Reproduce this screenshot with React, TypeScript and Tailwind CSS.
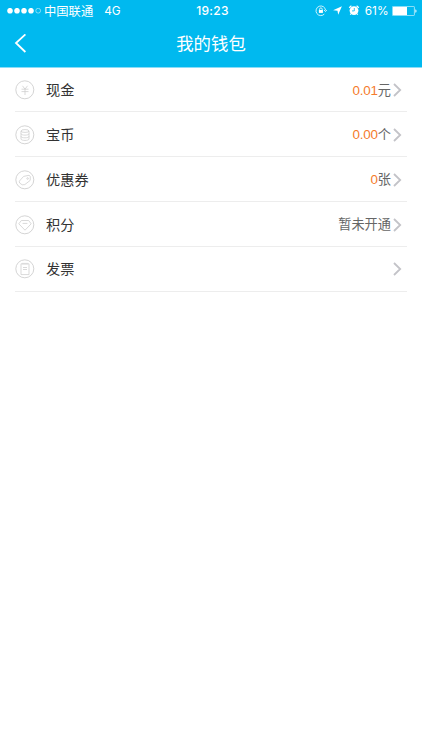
import type { ReactNode } from 'react';

const cjk = "font-['Liberation_Sans','Noto_Sans_CJK_SC',sans-serif]";

function RowIcon({ children }: { children: ReactNode }) {
  return (
    <svg className="h-5 w-5 shrink-0" viewBox="0 0 20 20" fill="none" stroke="#cfcfcf" strokeWidth="0.8" strokeLinejoin="round">
      <circle cx="9.8" cy="9.8" r="9" strokeWidth="0.9" />
      {children}
    </svg>
  );
}

function Chevron() {
  return (
    <svg className="h-[14px] w-[9px] shrink-0" viewBox="0 0 9 14" fill="none" stroke="#c3c3c8" strokeWidth="1.8">
      <path d="M1 1 7.2 7 1 13" />
    </svg>
  );
}

const rows: { label: string; amount?: string; unit?: string; icon: ReactNode }[] = [
  {
    label: '现金',
    amount: '0.01',
    unit: '元',
    icon: <path d="M7.5 5.8 10 9.2 12.5 5.8M6.5 9.2h7M6.5 11.6h7M10 9.2V15" />,
  },
  {
    label: '宝币',
    amount: '0.00',
    unit: '个',
    icon: (
      <>
        <ellipse cx="10" cy="6" rx="4" ry="1.4" />
        <path d="M6 6v8c0 1.9 8 1.9 8 0V6M6 8.7c0 1.9 8 1.9 8 0M6 11.4c0 1.9 8 1.9 8 0" />
      </>
    ),
  },
  {
    label: '优惠券',
    amount: '0',
    unit: '张',
    icon: (
      <>
        <path d="M4.3 11.2 8.6 6.4 14 5.3 15.3 6.4 15.2 10.4 9.8 14.6 7.2 14.8 4.6 13Z" />
        <circle cx="12.6" cy="8.5" r="0.8" />
      </>
    ),
  },
  {
    label: '积分',
    unit: '暂未开通',
    icon: <path d="M6.4 5.5h7.2l2.6 3.3L10 15.2 3.8 8.8ZM7.6 8.4h4.8" />,
  },
  {
    label: '发票',
    icon: <path d="M6 4.8h8v10.8H6ZM8 3.8v1.8M10 3.8v1.8M12 3.8v1.8M8 8.5h4M8 10.5h4" />,
  },
];

export default function App() {
  return (
    <div className={`flex h-[750px] w-full flex-col bg-white ${cjk}`}>
      <header className="h-[68px] border-b border-[#8adcf7] bg-[#00b9ef] text-white">
        <div className="grid h-[22px] grid-cols-[1fr_auto_1fr] items-center text-[12px] leading-none">
          <div className="flex items-center pl-[7px]">
            <svg className="h-[6px] w-[35px]" viewBox="0 0 35 6" fill="white">
              <circle cx="3" cy="2.7" r="2.8" />
              <circle cx="10" cy="2.7" r="2.8" />
              <circle cx="17" cy="2.7" r="2.8" />
              <circle cx="24" cy="2.7" r="2.8" />
              <circle cx="31.2" cy="2.7" r="2.4" fill="none" stroke="white" strokeWidth="0.5" />
            </svg>
            <span className="ml-[2px] pt-[2px] text-[12.3px]">中国联通</span>
            <span className="ml-[11px] pt-[2px] font-['Inter',sans-serif] text-[11.8px]">4G</span>
          </div>
          <span className="pl-[3px] font-['Inter',sans-serif] text-[12px] font-medium tracking-[0.25px]">19:23</span>
          <div className="flex items-center justify-end pr-[5.5px]">
            <svg className="h-[12px] w-[12px]" viewBox="0 0 12 12" fill="none" stroke="white" strokeWidth="0.8">
              <path d="M10.6 5.3A4.8 4.8 0 1 0 9.3 9.1M9 5.1l1.6 1.4L12 5.1" />
              <path d="M4.6 5.2V4.2a1.3 1.3 0 0 1 2.6 0v1" />
              <rect x="3.9" y="5" width="4" height="2.9" fill="white" stroke="none" />
            </svg>
            <svg className="ml-[6px] h-[9px] w-[9px]" viewBox="0 0 9 9" fill="white">
              <path d="M8.9.2 5.2 8.8 4.5 4.7.1 4.3Z" />
            </svg>
            <svg className="ml-[6px] h-[11px] w-[12px]" viewBox="0 0 12 11">
              <circle cx="6" cy="5.6" r="4.4" fill="white" />
              <path d="M1.2 2.7 3.4.8M10.8 2.7 8.6.8M3 8.8l-.8.9M9 8.8l.8.9" stroke="white" strokeWidth="1.2" />
              <path d="M6.3 3v2.9H4" fill="none" stroke="#00b9ef" strokeWidth="0.8" />
            </svg>
            <span className="ml-[5px] pt-[2px] font-['Inter',sans-serif] text-[11.8px]">61%</span>
            <svg className="ml-[3px] h-[10px] w-[25px]" viewBox="0 0 25 10" fill="none">
              <rect x="0.4" y="0.4" width="22" height="9.2" rx="0.8" stroke="white" strokeWidth="0.6" />
              <rect x="1" y="1" width="14" height="8" fill="white" />
              <path d="M23.4 3.2c1.5.4 1.5 3.2 0 3.6Z" fill="white" />
            </svg>
          </div>
        </div>
        <div className="grid h-[43px] grid-cols-[1fr_auto_1fr] items-center">
          <svg className="ml-[14px] h-[20px] w-[13px]" viewBox="0 0 13 20" fill="none" stroke="white" strokeWidth="1.8">
            <path d="M11.4.4 2 9 11.4 18" />
          </svg>
          <h1 className="pt-[2px] text-[17.4px] font-normal leading-none">我的钱包</h1>
        </div>
      </header>
      <main className="px-[15px]">
        {rows.map((row) => (
          <div
            key={row.label}
            className="flex h-[45px] items-center border-b border-[#ededed] pr-[5px] pt-px first:h-[44px] last:pt-0 last:pb-px"
          >
            <RowIcon>{row.icon}</RowIcon>
            <span className="ml-[11px] flex-1 pt-px text-[14.2px] leading-none text-[#333]">{row.label}</span>
            <span className="flex items-center pt-px text-[13.2px] leading-none text-[#666]">
              {row.amount && (
                <span className="font-['Liberation_Sans',sans-serif] text-[13.4px] tracking-[-0.2px] text-[#f57b2c]">{row.amount}</span>
              )}
              {row.unit}
            </span>
            <span className="ml-[2px] flex">
              <Chevron />
            </span>
          </div>
        ))}
      </main>
    </div>
  );
}
